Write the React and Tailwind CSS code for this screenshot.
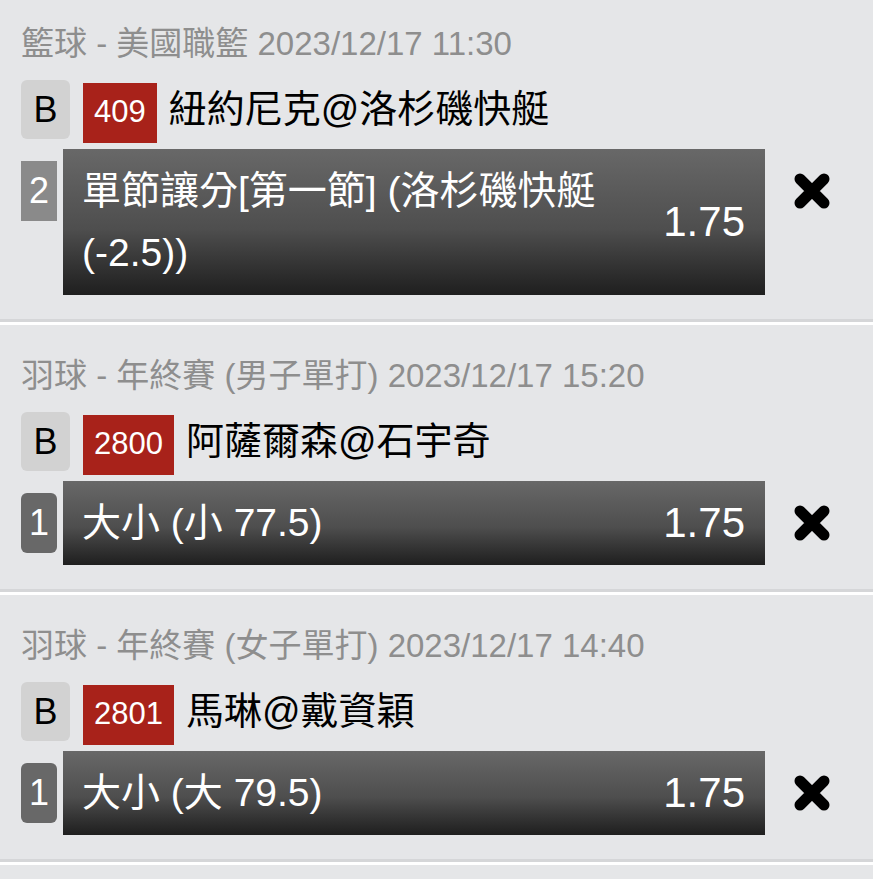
const font = { fontFamily: '"Liberation Sans", "Noto Sans CJK TC", sans-serif' };

const bets = [
  {
    league: '籃球 - 美國職籃 2023/12/17 11:30',
    code: '409',
    match: '紐約尼克@洛杉磯快艇',
    num: '2',
    numStyle: 'bg-[#8a8a8a]',
    pick: '單節讓分[第一節] (洛杉磯快艇 (-2.5))',
    odds: '1.75',
  },
  {
    league: '羽球 - 年終賽 (男子單打) 2023/12/17 15:20',
    code: '2800',
    match: '阿薩爾森@石宇奇',
    num: '1',
    numStyle: 'bg-[#686868] rounded-[6px]',
    pick: '大小 (小 77.5)',
    odds: '1.75',
  },
  {
    league: '羽球 - 年終賽 (女子單打) 2023/12/17 14:40',
    code: '2801',
    match: '馬琳@戴資穎',
    num: '1',
    numStyle: 'bg-[#686868] rounded-[6px]',
    pick: '大小 (大 79.5)',
    odds: '1.75',
  },
];

const CloseIcon = () => (
  <svg width="38" height="38" viewBox="0 0 38 38" className="blur-[0.7px]">
    <path d="M7 7 L31 31 M31 7 L7 31" stroke="#000" strokeWidth="11" strokeLinecap="round" />
  </svg>
);

const BetItem = ({ bet }) => (
  <div>
    <div className="pl-[21px] pt-[31px] pb-[24px]">
      <div className="text-[33px] leading-[40px] text-[#8e8e8e] whitespace-nowrap">{bet.league}</div>

      <div className="flex items-start mt-[16px]">
        <div className="w-[49px] h-[59px] rounded-[6px] bg-[#d2d2d2] flex items-center justify-center text-[36px] leading-none text-black shrink-0">
          B
        </div>
        <div className="ml-[13px] mt-[3px] h-[60px] px-[11px] pb-[3px] bg-[#a8221a] text-white text-[31px] leading-none flex items-center shrink-0">
          {bet.code}
        </div>
        <div className="ml-[12px] text-[38px] leading-[59px] text-black whitespace-nowrap">{bet.match}</div>
      </div>

      <div className="flex items-start mt-[6px]">
        <div className={`w-[36px] h-[60px] mt-[12px] shrink-0 flex items-center justify-center text-white text-[36px] leading-none ${bet.numStyle}`}>
          {bet.num}
        </div>
        <div className="ml-[6px] w-[702px] shrink-0 flex items-center gap-[24px] pl-[19px] pr-[20px] py-[11px] bg-gradient-to-b from-[#686868] via-[#4e4e4e] via-55% to-[#1f1f1f]">
          <div className="flex-1 text-white text-[39px] leading-[62px]">{bet.pick}</div>
          <div className="shrink-0 text-white text-[42px] leading-[62px]">{bet.odds}</div>
        </div>
        <div className="ml-[28px] mt-[23px] shrink-0">
          <CloseIcon />
        </div>
      </div>
    </div>
    <div className="h-[3px] bg-[#d5d6d8]" />
    <div className="h-[3px] bg-white" />
  </div>
);

export default function App() {
  return (
    <div className="min-h-screen bg-white overflow-hidden" style={font}>
      <div className="w-[873px] min-h-[886px] bg-[#e5e6e8]">
        <div className="-mt-[7px]">
          {bets.map((bet, i) => (
            <BetItem key={i} bet={bet} />
          ))}
        </div>
      </div>
    </div>
  );
}
